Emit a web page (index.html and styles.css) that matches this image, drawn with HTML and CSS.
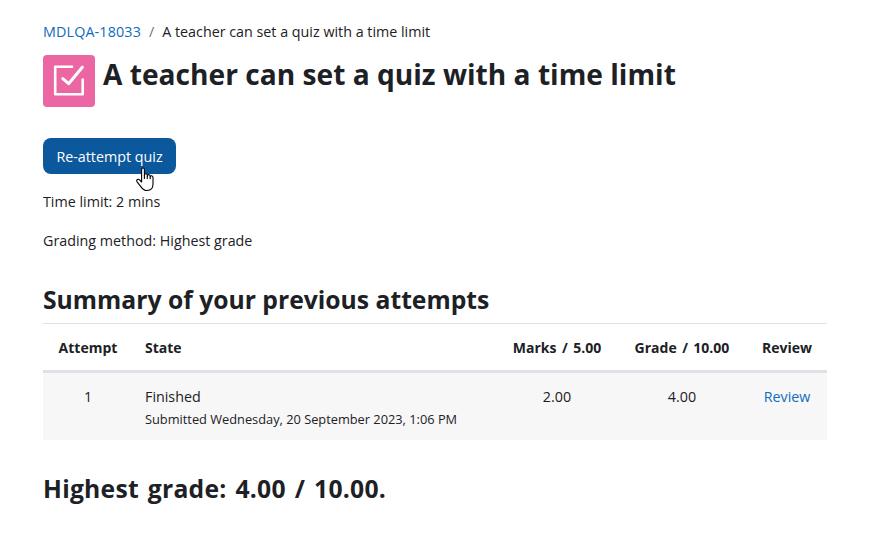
FILE: index.html
```html
<!DOCTYPE html>
<html lang="en">
<head>
  <meta charset="UTF-8">
  <meta name="viewport" content="width=device-width, initial-scale=1.0">
  <title>A teacher can set a quiz with a time limit</title>
  <link rel="stylesheet" href="styles.css">
</head>
<body>
  <nav class="breadcrumb">
    <a class="course" href="#">MDLQA-18033</a>
    <span class="divider">/</span>
    <span class="current">A teacher can set a quiz with a time limit</span>
  </nav>

  <header class="page-header">
    <div class="activity-icon">
      <svg width="52" height="52" viewBox="0 0 52 52" fill="none" stroke="#fff" stroke-width="2.6" stroke-linecap="round" stroke-linejoin="round">
        <path d="M29 11.8H12.2V39.2H39.7V24.5"/>
        <path d="M19.8 23.7L25.6 28.7L39.3 12.2" stroke-width="3"/>
      </svg>
    </div>
    <h1>A teacher can set a quiz with a time limit</h1>
  </header>

  <button class="btn">Re-attempt quiz
    <svg class="pointer" width="18" height="25" viewBox="0 0 18 25" fill="#fff" stroke="#000" stroke-width="1.1" stroke-linejoin="round">
      <path d="M5.6 15V2.5C5.6 .4 8.4 .4 8.4 2.5V8.5C8.4 6.2 11.3 6.2 11.3 8.5V9.2C11.3 7 14.2 7.2 14.2 9.4V10C14.4 8.2 17 8.4 17 10.6V17C17 21 14.8 23.5 11 23.5C7.8 23.5 6.3 22 4.8 19.6L1.1 14.8C-.1 12.8 2.2 11.5 3.6 12.9Z"/>
      <path d="M8.4 8.3V12M11.3 9V12M14.2 9.8V12.3"/>
    </svg>
  </button>

  <p class="info">Time limit: 2 mins</p>
  <p class="info">Grading method: Highest grade</p>

  <h2 class="summary-title">Summary of your previous attempts</h2>
  <table class="attempts">
    <thead>
      <tr>
        <th class="col-attempt">Attempt</th>
        <th class="col-state">State</th>
        <th class="col-marks">Marks / 5.00</th>
        <th class="col-grade">Grade / 10.00</th>
        <th class="col-review">Review</th>
      </tr>
    </thead>
    <tbody>
      <tr>
        <td>1</td>
        <td class="col-state">Finished<br><span class="details">Submitted Wednesday, 20 September 2023, 1:06 PM</span></td>
        <td>2.00</td>
        <td>4.00</td>
        <td><a href="#">Review</a></td>
      </tr>
    </tbody>
  </table>

  <h2 class="final-grade">Highest grade: 4.00 / 10.00.</h2>
</body>
</html>
```
FILE: styles.css
```css
body {
  margin: 0;
  padding: 21px 44px 0 43px;
  background-color: #fff;
  color: #1d2125;
  font-family: "Open Sans", "Noto Sans", sans-serif;
  font-size: 14.3px;
  line-height: 22px;
}

a {
  color: #0f6cbf;
  text-decoration: none;
}

h1, h2, p {
  margin: 0;
  white-space: nowrap;
}

.breadcrumb {
  display: flex;
  gap: 8px;
  height: 22px;
}

.course {
  letter-spacing: 0.15px;
}

.divider {
  color: #6a737b;
}

.page-header {
  display: flex;
  gap: 8px;
  margin-top: 12px;
}

.activity-icon {
  width: 52px;
  height: 52px;
  border-radius: 4px;
  background-color: #eb66a2;
}

.activity-icon svg {
  display: block;
}

h1 {
  font-size: 28.15px;
  line-height: 38px;
}

.btn {
  position: relative;
  display: block;
  width: 133px;
  height: 36px;
  margin-top: 31px;
  padding: 2px 0 0;
  border: none;
  border-radius: 8px;
  background-color: #0c589c;
  color: #fff;
  font: inherit;
  cursor: pointer;
}

/* hand cursor over the button */
.pointer {
  position: absolute;
  left: 93px;
  top: 29px;
}

.info {
  margin-top: 17px;
}

h2 {
  font-size: 24.7px;
  line-height: 36px;
}

.summary-title {
  margin-top: 30px;
}

.attempts {
  width: 784px;
  margin-top: 5px;
  border-collapse: separate;
  border-spacing: 0;
  table-layout: fixed;
}

.attempts th,
.attempts td {
  box-sizing: border-box;
  text-align: center;
  vertical-align: top;
  white-space: nowrap;
}

.attempts th {
  height: 50px;
  padding: 13px 0 11px;
  border-top: 1px solid #dee2e6;
  border-bottom: 3px solid #dee2e6;
  font-size: 14px;
}

.attempts td {
  height: 67px;
  padding: 13px 12px 9px;
  background-color: #f7f7f7;
}

.attempts .col-state {
  padding-left: 12px;
  text-align: left;
}

.col-attempt {
  width: 90px;
}

.col-marks {
  width: 120px;
}

.col-grade {
  width: 130px;
}

.col-marks,
.col-grade {
  word-spacing: 1.8px;
}

.col-review {
  width: 80px;
}

.details {
  font-size: 12.8px;
}

.final-grade {
  margin-top: 31px;
  letter-spacing: 0.25px;
  word-spacing: 2.2px;
}
```
